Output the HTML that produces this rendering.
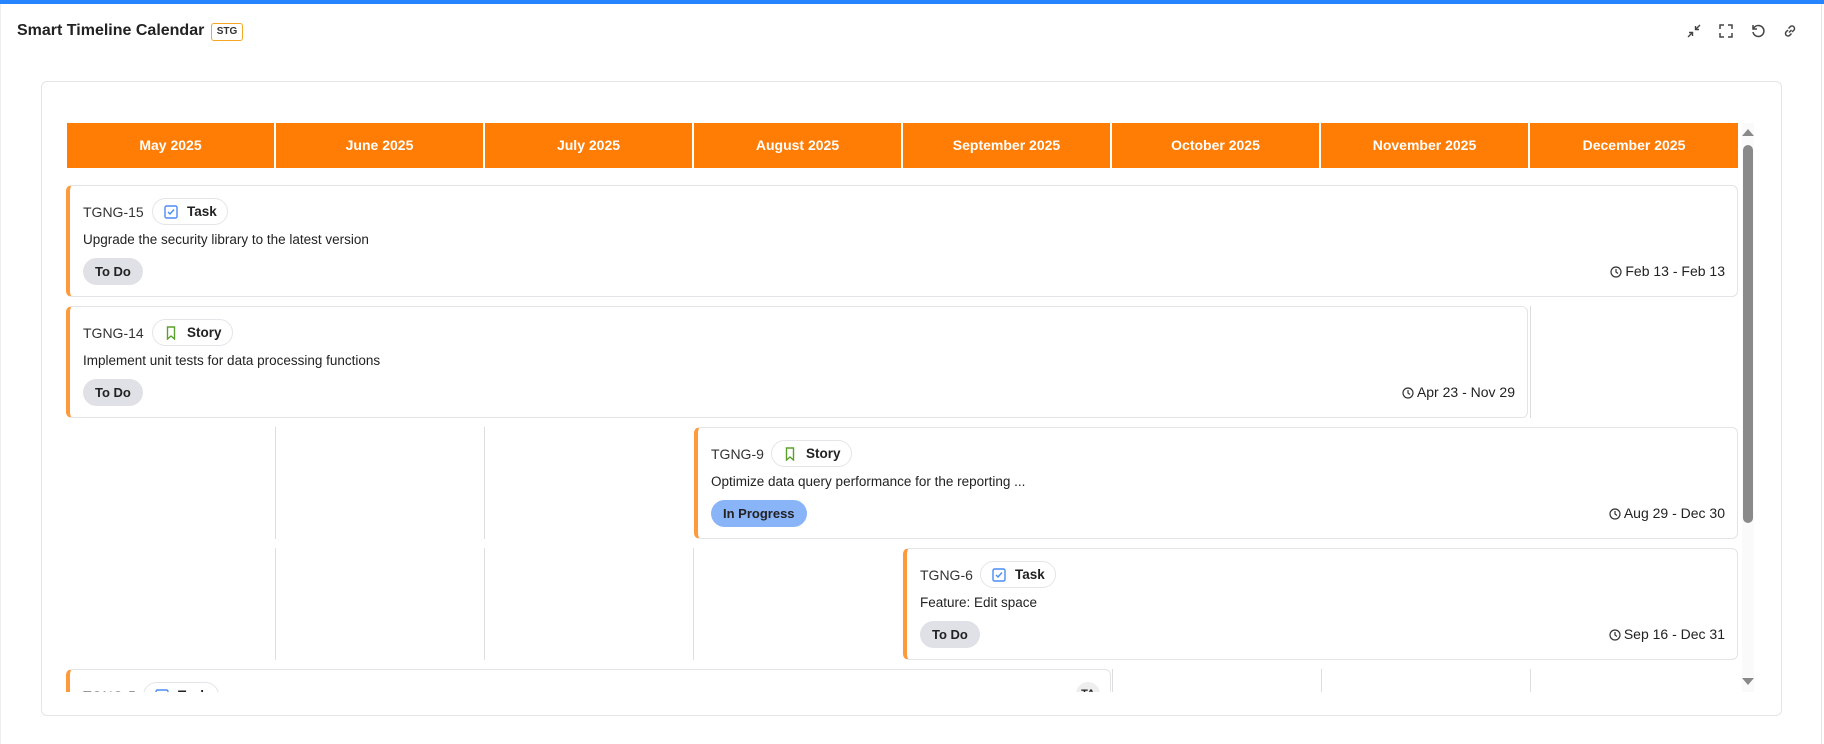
<!DOCTYPE html>
<html><head><meta charset="utf-8"><style>
*{box-sizing:border-box;margin:0;padding:0}
body{width:1824px;height:744px;background:#fff;font-family:"Liberation Sans",sans-serif;color:#222;position:relative;overflow:hidden}
.top{position:absolute;left:0;top:0;width:1824px;height:4px;background:#2684ff}
.pg{position:absolute;left:0;top:4px;width:1822px;height:740px;border-left:1px solid #eee;border-right:1px solid #e5e5e5}
.title{position:absolute;left:17px;top:22px;font-size:16px;font-weight:bold;color:#222}
.badge{position:absolute;left:211px;top:23px;width:32px;height:18px;border:1px solid #f5a623;border-radius:3px;font-size:10px;font-weight:bold;text-align:center;line-height:16px;color:#333}
.ic{position:absolute;top:24px;width:14px;height:14px}
.box{position:absolute;left:41px;top:81px;width:1741px;height:635px;border:1px solid #e3e5e8;border-radius:6px}
.scroll{position:absolute;left:66px;top:123px;width:1690px;height:569px;overflow:hidden}
.hdr{position:absolute;top:0;height:45px;background:#ff7c05;color:#fff;font-weight:bold;font-size:14px;text-align:center;line-height:45px}
.vl{position:absolute;width:1px;background:#ddd}
.card{position:absolute;height:112px;background:#fff;border:1px solid #e2e4e8;border-left:4px solid #ff9a3c;border-radius:6px}
.id{position:absolute;left:13px;top:18px;font-size:14px;color:#333}
.chip{position:absolute;top:12px;height:27px;border:1px solid #e3e5e8;border-radius:14px;font-size:13.5px;font-weight:bold;line-height:25px;padding:0 10px 0 34px}
.chip svg{position:absolute;left:11px;top:6px}
.desc{position:absolute;left:13px;top:46px;font-size:13.5px;color:#222}
.pill{position:absolute;left:13px;top:72px;height:27px;border-radius:14px;background:#dfe1e6;font-size:13px;font-weight:bold;line-height:27px;padding:0 12px}
.date{position:absolute;right:12px;top:77px;font-size:14px;color:#222}
.date svg{vertical-align:-2px;margin-right:3px}
.sb{position:absolute;left:1742px;top:123px;width:12px;height:569px;background:#fafafa}
</style></head><body>
<div class="top"></div><div class="pg"></div>
<div class="title">Smart Timeline Calendar</div><div class="badge">STG</div>
<svg class="ic" style="left:1687px" viewBox="0 0 14 14" fill="none" stroke="#444" stroke-width="1.4"><path d="M1 13L5.5 8.5M2 8.5h3.5V12M13 1L8.5 5.5M12 5.5H8.5V2"/></svg>
<svg class="ic" style="left:1719px" viewBox="0 0 14 14" fill="none" stroke="#444" stroke-width="1.5"><path d="M1 5V1h4M9 1h4v4M13 9v4H9M5 13H1V9"/></svg>
<svg class="ic" style="left:1751px" viewBox="0 0 14 14" fill="none" stroke="#444" stroke-width="1.5"><path d="M2.5 4.5A5.5 5.5 0 1 1 2 8"/><path d="M2 1v4h4"/></svg>
<svg class="ic" style="left:1783px" viewBox="0 0 14 14" fill="none" stroke="#444" stroke-width="1.5"><path d="M6 8.5l2.5-2.5M5 6L3 8a2.5 2.5 0 0 0 3.5 3.5l2-2M9 8l2-2A2.5 2.5 0 0 0 7.5 2.5l-2 2"/></svg>
<div class="box"></div>
<div class="scroll">
<div class="hdr" style="left:1px;width:207px">May 2025</div>
<div class="hdr" style="left:210px;width:207px">June 2025</div>
<div class="hdr" style="left:419px;width:207px">July 2025</div>
<div class="hdr" style="left:628px;width:207px">August 2025</div>
<div class="hdr" style="left:837px;width:207px">September 2025</div>
<div class="hdr" style="left:1046px;width:207px">October 2025</div>
<div class="hdr" style="left:1255px;width:207px">November 2025</div>
<div class="hdr" style="left:1464px;width:208px">December 2025</div>

<div class="vl" style="left:1464px;top:183px;height:112px"></div>
<div class="vl" style="left:209px;top:304px;height:112px"></div>
<div class="vl" style="left:418px;top:304px;height:112px"></div>
<div class="vl" style="left:209px;top:425px;height:112px"></div>
<div class="vl" style="left:418px;top:425px;height:112px"></div>
<div class="vl" style="left:627px;top:425px;height:112px"></div>
<div class="vl" style="left:1046px;top:546px;height:40px"></div>
<div class="vl" style="left:1255px;top:546px;height:40px"></div>
<div class="vl" style="left:1464px;top:546px;height:40px"></div>

<div class="card" style="left:0;top:62px;width:1672px">
<div class="id">TGNG-15</div>
<div class="chip" style="left:82px"><svg width="14" height="14" viewBox="0 0 14 14" fill="none"><rect x="1" y="1" width="12" height="12" rx="1.5" stroke="#4c8cf5" stroke-width="1.4"/><path d="M4 7l2 2 4-4.5" stroke="#4c8cf5" stroke-width="1.4"/></svg>Task</div>
<div class="desc">Upgrade the security library to the latest version</div>
<div class="pill">To Do</div>
<div class="date"><svg width="12" height="12" viewBox="0 0 12 12" fill="none" stroke="#333" stroke-width="1.2"><circle cx="6" cy="6" r="5"/><path d="M6 3v3l2 1.5"/></svg>Feb 13 - Feb 13</div>
</div>
<div class="card" style="left:0;top:183px;width:1462px">
<div class="id">TGNG-14</div>
<div class="chip" style="left:82px"><svg width="14" height="14" viewBox="0 0 14 14" fill="none"><path d="M3.5 1h7v12L7 10l-3.5 3z" stroke="#5aa02c" stroke-width="1.4"/></svg>Story</div>
<div class="desc">Implement unit tests for data processing functions</div>
<div class="pill">To Do</div>
<div class="date"><svg width="12" height="12" viewBox="0 0 12 12" fill="none" stroke="#333" stroke-width="1.2"><circle cx="6" cy="6" r="5"/><path d="M6 3v3l2 1.5"/></svg>Apr 23 - Nov 29</div>
</div>
<div class="card" style="left:628px;top:304px;width:1044px">
<div class="id">TGNG-9</div>
<div class="chip" style="left:73px"><svg width="14" height="14" viewBox="0 0 14 14" fill="none"><path d="M3.5 1h7v12L7 10l-3.5 3z" stroke="#5aa02c" stroke-width="1.4"/></svg>Story</div>
<div class="desc">Optimize data query performance for the reporting ...</div>
<div class="pill" style="background:#8ab4f8">In Progress</div>
<div class="date"><svg width="12" height="12" viewBox="0 0 12 12" fill="none" stroke="#333" stroke-width="1.2"><circle cx="6" cy="6" r="5"/><path d="M6 3v3l2 1.5"/></svg>Aug 29 - Dec 30</div>
</div>
<div class="card" style="left:837px;top:425px;width:835px">
<div class="id">TGNG-6</div>
<div class="chip" style="left:73px"><svg width="14" height="14" viewBox="0 0 14 14" fill="none"><rect x="1" y="1" width="12" height="12" rx="1.5" stroke="#4c8cf5" stroke-width="1.4"/><path d="M4 7l2 2 4-4.5" stroke="#4c8cf5" stroke-width="1.4"/></svg>Task</div>
<div class="desc">Feature: Edit space</div>
<div class="pill">To Do</div>
<div class="date"><svg width="12" height="12" viewBox="0 0 12 12" fill="none" stroke="#333" stroke-width="1.2"><circle cx="6" cy="6" r="5"/><path d="M6 3v3l2 1.5"/></svg>Sep 16 - Dec 31</div>
</div>
<div class="card" style="left:0;top:546px;width:1045px">
<div class="id">TGNG-5</div>
<div class="chip" style="left:73px"><svg width="14" height="14" viewBox="0 0 14 14" fill="none"><rect x="1" y="1" width="12" height="12" rx="1.5" stroke="#4c8cf5" stroke-width="1.4"/><path d="M4 7l2 2 4-4.5" stroke="#4c8cf5" stroke-width="1.4"/></svg>Task</div>
<div style="position:absolute;right:10px;top:12px;width:24px;height:24px;border-radius:12px;background:#eee;font-size:11px;font-weight:bold;text-align:center;line-height:24px">TA</div>
</div>
</div>
<div class="sb">
<svg style="position:absolute;left:0;top:5px" width="12" height="8" viewBox="0 0 12 8"><path d="M0 8L6 1l6 7z" fill="#8a8a8a"/></svg>
<div style="position:absolute;left:1px;top:22px;width:10px;height:378px;border-radius:5px;background:#8a8a8a"></div>
<svg style="position:absolute;left:0;top:555px" width="12" height="8" viewBox="0 0 12 8"><path d="M0 0L6 7l6-7z" fill="#8a8a8a"/></svg>
</div>
</body></html>
